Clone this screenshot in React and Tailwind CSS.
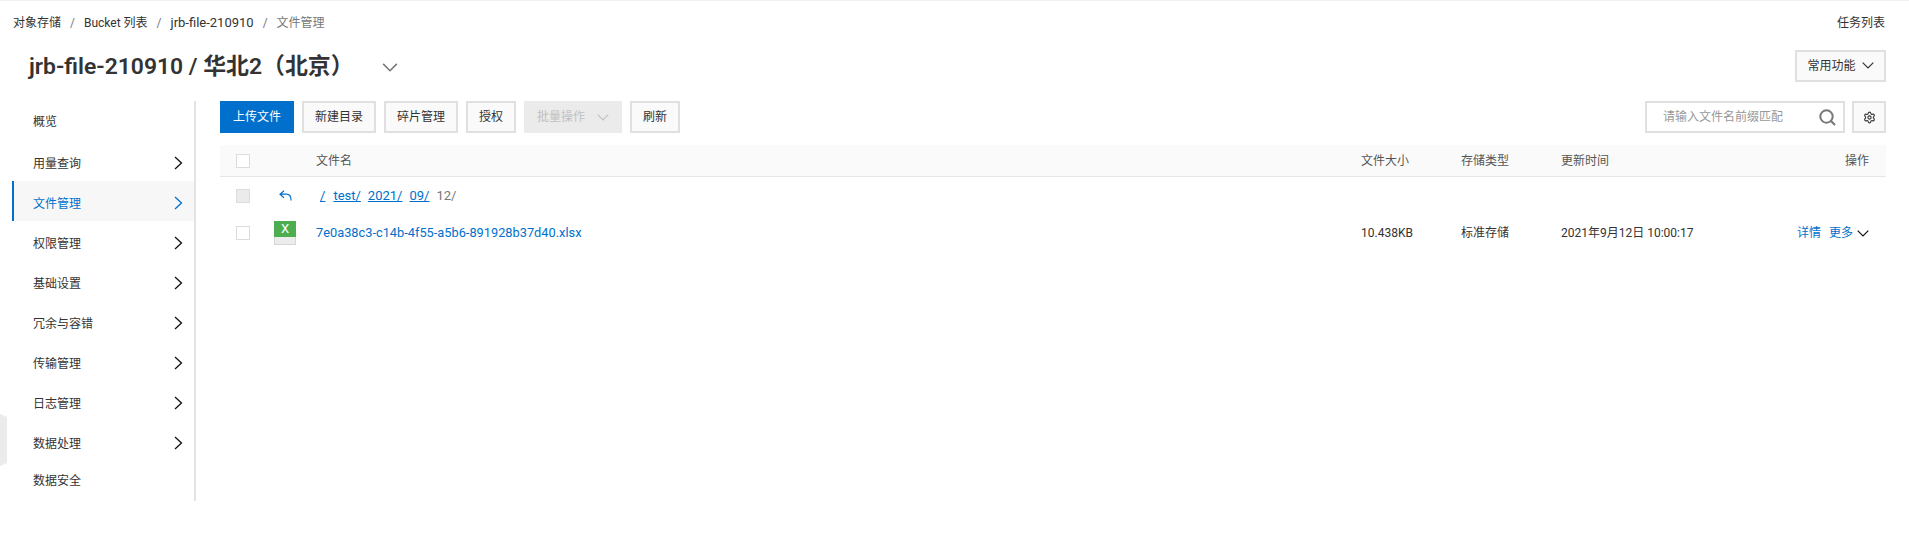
import { Settings } from 'lucide-react'

const FONT = { fontFamily: 'Roboto, "Noto Sans CJK SC", sans-serif' }

// ─── Icons ───────────────────────────────────────────────────────────────────
function ChevronRight({ className = '' }) {
  return (
    <svg width="9" height="14" viewBox="0 0 9 14" fill="none" className={className}>
      <path d="M1 1l6.5 6L1 13" stroke="currentColor" strokeWidth="1.3" />
    </svg>
  )
}

function ChevronDown({ w = 12, h = 7, className = '' }) {
  return (
    <svg width={w} height={h} viewBox="0 0 12 7" fill="none" className={className}>
      <path d="M.7.7L6 6l5.3-5.3" stroke="currentColor" strokeWidth="1.2" />
    </svg>
  )
}

function BackArrow() {
  return (
    <svg width="13" height="11" viewBox="0 0 13 11" fill="none" className="text-[#0070cc]">
      <path d="M5 .7L1 4.2l4 3.5M1 4.2h6.5c2.6 0 4.6 1.6 4.6 6.3" stroke="currentColor" strokeWidth="1.2" />
    </svg>
  )
}

function SearchIcon() {
  return (
    <svg width="17" height="17" viewBox="0 0 17 17" fill="none" className="text-[#777]">
      <circle cx="7.5" cy="7.5" r="6.2" stroke="currentColor" strokeWidth="2" />
      <path d="M12 12l4 4" stroke="currentColor" strokeWidth="2.2" />
    </svg>
  )
}

function ExcelIcon() {
  return (
    <div className="relative w-[22px] h-[24px] flex flex-col">
      <div className="h-[16px] bg-[#4cae50] text-white text-[13px] leading-[15px] text-center">X</div>
      <div className="h-[8px] bg-[#ececec] border border-t-0 border-[#d7d7d7]" />
    </div>
  )
}

// ─── Bits ────────────────────────────────────────────────────────────────────
function Btn({ children, className = '' }) {
  return (
    <button className={`h-[32px] border-2 border-[#e0e0e0] bg-[#fafafa] text-[#333] text-[12px] flex items-center justify-center ${className}`}>
      {children}
    </button>
  )
}

function Checkbox({ disabled = false }) {
  return <span className={`block w-[14px] h-[14px] border border-[#dcdcdc] ${disabled ? 'bg-[#ebebeb]' : 'bg-white'}`} />
}

const NAV = ['用量查询', '文件管理', '权限管理', '基础设置', '冗余与容错', '传输管理', '日志管理', '数据处理']

function Sidebar() {
  return (
    <aside className="w-[184px] ml-[12px] h-[400px] border-r-2 border-[#e3e3e3] text-[12px] text-[#333] shrink-0">
      <div className="h-[40px] pl-[21px] pt-[1px] flex items-center">概览</div>
      {NAV.map((item) => {
        const active = item === '文件管理'
        return (
          <div
            key={item}
            className={`h-[40px] pr-[11px] pt-[6px] flex items-center justify-between ${
              active ? 'bg-[#f7f7f7] text-[#0070cc] border-l-[2px] border-[#0070cc] pl-[19px]' : 'pl-[21px]'
            }`}
          >
            <span>{item}</span>
            <ChevronRight className={`-mt-[3px] ${active ? 'text-[#0070cc]' : 'text-[#111]'}`} />
          </div>
        )
      })}
      <div className="h-[40px] pl-[21px] flex items-center">数据安全</div>
    </aside>
  )
}

function Toolbar() {
  return (
    <div className="flex items-center h-[32px]">
      <button className="w-[74px] h-[32px] bg-[#0070cc] text-white text-[12px]">上传文件</button>
      <Btn className="w-[74px] ml-[8px]">新建目录</Btn>
      <Btn className="w-[74px] ml-[8px]">碎片管理</Btn>
      <Btn className="w-[50px] ml-[8px]">授权</Btn>
      <button className="w-[98px] h-[32px] ml-[8px] bg-[#ebebeb] text-[#c1c1c1] text-[12px] flex items-center justify-center gap-[12px]">
        批量操作
        <ChevronDown />
      </button>
      <Btn className="w-[50px] ml-[8px]">刷新</Btn>
      <div className="ml-auto w-[200px] h-[32px] border-2 border-[#e0e0e0] flex items-center justify-between pl-[16px] pr-[7px] text-[12px] text-[#999]">
        请输入文件名前缀匹配
        <SearchIcon />
      </div>
      <Btn className="w-[34px] ml-[7px]">
        <Settings size={13} strokeWidth={2} className="text-[#333]" />
      </Btn>
    </div>
  )
}

function Table() {
  return (
    <div className="mt-[12px] text-[12px]">
      <div className="h-[32px] bg-[#fafafa] border-b border-[#e6e6e6] flex items-center text-[#555]">
        <span className="w-[96px] pl-[16px]"><Checkbox /></span>
        <span className="w-[1045px]">文件名</span>
        <span className="w-[100px]">文件大小</span>
        <span className="w-[100px]">存储类型</span>
        <span className="flex-1">更新时间</span>
        <span className="pr-[17px]">操作</span>
      </div>
      <div className="h-[37px] flex items-center">
        <span className="w-[59px] pl-[16px]"><Checkbox disabled /></span>
        <span className="w-[37px]"><BackArrow /></span>
        <span className="flex gap-[7px] text-[13px] text-[#0070cc] pl-[4px]">
          <span className="underline mr-[1px]">/</span>
          <span className="underline">test/</span>
          <span className="underline">2021/</span>
          <span className="underline">09/</span>
          <span className="text-[#777]">12/</span>
        </span>
      </div>
      <div className="h-[38px] flex items-center">
        <span className="w-[54px] pl-[16px]"><Checkbox /></span>
        <span className="w-[42px]"><ExcelIcon /></span>
        <span className="w-[1045px] text-[#0070cc] text-[12.8px]">7e0a38c3-c14b-4f55-a5b6-891928b37d40.xlsx</span>
        <span className="w-[100px] text-[#333]">10.438KB</span>
        <span className="w-[100px] text-[#333]">标准存储</span>
        <span className="flex-1 text-[#333]">2021年9月12日 10:00:17</span>
        <span className="flex items-center pr-[17px] text-[#0070cc]">
          详情
          <span className="ml-[8px]">更多</span>
          <ChevronDown w={12} h={7} className="ml-[4px] text-[#111]" />
        </span>
      </div>
    </div>
  )
}

export default function App() {
  return (
    <div className="relative w-[1909px] h-[558px] bg-white overflow-hidden border-t border-[#f2f2f2]" style={FONT}>
      <header className="h-[43px] pl-[13px] pr-[24px] flex items-center justify-between text-[12px] text-[#333]">
        <div className="flex items-center gap-[9px]">
          <span>对象存储</span>
          <span className="text-[#777]">/</span>
          <span>Bucket 列表</span>
          <span className="text-[#777]">/</span>
          <span className="text-[13px]">jrb-file-210910</span>
          <span className="text-[#777]">/</span>
          <span className="text-[#777]">文件管理</span>
        </div>
        <span>任务列表</span>
      </header>

      <div className="h-[57px] pl-[29px] pr-[23px] pb-[11px] flex items-center">
        <h1 className="text-[22.9px] font-semibold text-[#333]">jrb-file-210910 / 华北2（北京）</h1>
        <ChevronDown w={16} h={9} className="ml-[28px] text-[#777]" />
        <Btn className="ml-auto -mt-[3px] w-[91px] gap-[6px]">
          常用功能
          <ChevronDown />
        </Btn>
      </div>

      <div className="flex">
        <Sidebar />
        <main className="flex-1 ml-[24px] mr-[23px]">
          <Toolbar />
          <Table />
        </main>
      </div>

      {/* collapsed nav handle */}
      <div className="absolute left-0 top-[413px] w-[7px] h-[52px] bg-[#ebebeb] [clip-path:polygon(0_0,100%_6%,100%_94%,0_100%)]" />
    </div>
  )
}
